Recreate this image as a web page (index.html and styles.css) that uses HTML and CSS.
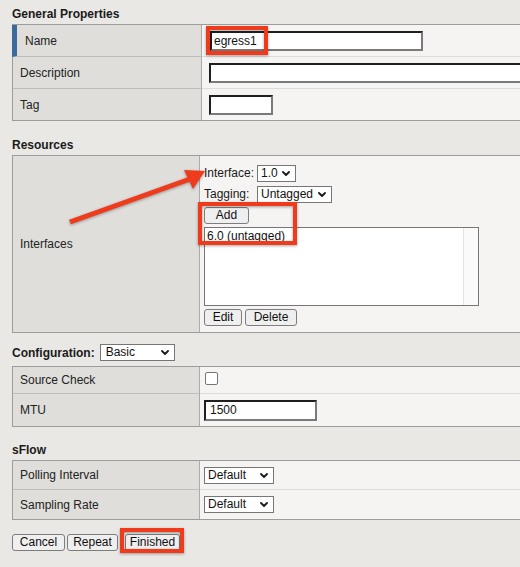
FILE: index.html
```html
<!DOCTYPE html>
<html>
<head>
<meta charset="utf-8">
<title>Interface properties</title>
<link rel="stylesheet" href="styles.css">
</head>
<body>
<div class="page">
  <h2 class="section-title title-general">General Properties</h2>
  <div class="ptable ptable-general">
    <div class="label label-active">Name</div>
    <div class="value value-general"><input class="textbox tb-name" type="text" value="egress1"></div>
    <div class="label">Description</div>
    <div class="value value-general"><input class="textbox tb-desc" type="text" value=""></div>
    <div class="label last">Tag</div>
    <div class="value value-general last"><input class="textbox tb-tag" type="text" value=""></div>
  </div>

  <h2 class="section-title title-resources">Resources</h2>
  <div class="ptable ptable-resources">
    <div class="label last">Interfaces</div>
    <div class="value value-res last">
      <div class="iface-form">
        <span class="form-label">Interface:</span>
        <span class="select sel-iface"><span>1.0</span><svg class="chev" viewBox="0 0 8 5" width="8" height="5"><path d="M1 1 L4 4 L7 1"/></svg></span>
        <span class="form-label">Tagging:</span>
        <span class="select sel-tag"><span>Untagged</span><svg class="chev" viewBox="0 0 8 5" width="8" height="5"><path d="M1 1 L4 4 L7 1"/></svg></span>
      </div>
      <button class="btn btn-add" type="button">Add</button>
      <div class="listbox">
        <div class="list-items"><div class="list-item">6.0 (untagged)</div></div>
        <div class="list-scroll"></div>
      </div>
      <div class="btn-row">
        <button class="btn btn-edit" type="button">Edit</button>
        <button class="btn btn-delete" type="button">Delete</button>
      </div>
    </div>
  </div>

  <div class="config-line">
    <h2 class="section-title inline">Configuration:</h2>
    <span class="select sel-basic"><span>Basic</span><svg class="chev" viewBox="0 0 8 5" width="8" height="5"><path d="M1 1 L4 4 L7 1"/></svg></span>
  </div>
  <div class="ptable ptable-config">
    <div class="label">Source Check</div>
    <div class="value value-std"><span class="checkbox"></span></div>
    <div class="label last">MTU</div>
    <div class="value value-std last"><input class="textbox tb-mtu" type="text" value="1500"></div>
  </div>

  <h2 class="section-title title-sflow">sFlow</h2>
  <div class="ptable ptable-sflow">
    <div class="label">Polling Interval</div>
    <div class="value value-std"><span class="select sel-default"><span>Default</span><svg class="chev" viewBox="0 0 8 5" width="8" height="5"><path d="M1 1 L4 4 L7 1"/></svg></span></div>
    <div class="label last">Sampling Rate</div>
    <div class="value value-std last"><span class="select sel-default"><span>Default</span><svg class="chev" viewBox="0 0 8 5" width="8" height="5"><path d="M1 1 L4 4 L7 1"/></svg></span></div>
  </div>

  <div class="actions">
    <button class="btn btn-cancel" type="button">Cancel</button>
    <button class="btn btn-repeat" type="button">Repeat</button>
    <button class="btn btn-finished" type="button">Finished</button>
  </div>
</div>

<svg class="annotations" width="520" height="567" viewBox="0 0 520 567">
  <rect class="mark" x="208" y="28" width="58" height="25"/>
  <rect class="mark" x="200" y="204" width="95" height="39"/>
  <rect class="mark" x="122" y="530" width="60" height="21"/>
  <line class="arrow-line" x1="70" y1="222" x2="190" y2="179"/>
  <polygon class="arrow-head" points="205,171 184,170 193,189"/>
</svg>
</body>
</html>
```
FILE: styles.css
```css
* { box-sizing: border-box; }
html, body { margin: 0; padding: 0; }
body {
  background: #e9e8e5;
  font-family: "Liberation Sans", Arial, Helvetica, sans-serif;
  font-size: 12px;
  color: #1e1e1e;
  width: 520px;
  height: 567px;
  overflow: hidden;
  position: relative;
}
.page { padding-left: 12px; width: 520px; overflow: hidden; }

.section-title {
  margin: 0;
  font-size: 12px;
  font-weight: bold;
  line-height: 19px;
  color: #1a1a1a;
}
.title-general { padding-top: 5px; }
.title-resources { padding-top: 15px; }
.title-sflow { padding-top: 14px; }
.section-title.inline { line-height: 17px; padding-top: 2px; }

.ptable {
  display: grid;
  border-top: 1px solid #9c9c9c;
  border-left: 1px solid #9c9c9c;
  width: 548px;
}
.ptable-general { grid-template-columns: 189px 1fr; grid-auto-rows: 32px; }
.ptable-resources { grid-template-columns: 187px 1fr; grid-template-rows: 177px; }
.ptable-config { grid-template-columns: 187px 1fr; grid-template-rows: 27px 33px; }
.ptable-sflow { grid-template-columns: 187px 1fr; grid-template-rows: 29px 30px; }

.label {
  background: #dfdedb;
  border-right: 1px solid #ababab;
  border-bottom: 1px solid #bdbdbd;
  display: flex;
  align-items: center;
  padding-left: 7px;
  color: #222;
}
.label-active {
  margin-left: -1px;
  border-left: 5px solid #3b6a9b;
  padding-left: 8px;
}
.value {
  background: #f5f4f2;
  border-bottom: 1px solid #dcdcdc;
  display: flex;
  align-items: center;
}
.label.last, .value.last { border-bottom-color: #9c9c9c; }
.value-general { padding-left: 7px; }
.value-std { padding-left: 4px; }
.value-res {
  flex-direction: column;
  align-items: flex-start;
  padding: 9px 0 0 4px;
}

.textbox {
  font-family: "Liberation Sans", Arial, sans-serif;
  font-size: 12px;
  color: #111;
  background: #fff;
  border-style: solid;
  border-width: 2px;
  border-color: #1f1f1f #7a7a7a #7a7a7a #1f1f1f;
  padding: 0 2px;
  margin: 0;
  height: 20px;
  outline: none;
}
.tb-name { width: 213px; margin-left: 1px; }
.tb-desc { width: 340px; }
.tb-tag { width: 64px; }
.tb-mtu { width: 113px; height: 21px; padding-left: 4px; }

.select {
  display: inline-flex;
  align-items: center;
  justify-content: space-between;
  height: 17px;
  background: #fff;
  border: 1px solid #767676;
  padding: 0 5px 0 3px;
  font-size: 12px;
  color: #111;
  line-height: 15px;
}
.chev { fill: none; stroke: #1a1a1a; stroke-width: 1.8; stroke-linecap: round; stroke-linejoin: round; }
.sel-iface { width: 39px; }
.sel-tag { width: 75px; }
.sel-basic { width: 75px; padding-left: 5px; }
.sel-default { width: 70px; }

.iface-form {
  display: grid;
  grid-template-columns: 53px auto;
  row-gap: 4px;
  align-items: center;
}
.form-label { color: #1a1a1a; line-height: 15px; }

.btn {
  font-family: "Liberation Sans", Arial, sans-serif;
  font-size: 12px;
  color: #111;
  background: #efefef;
  border: 1px solid #7d7d7d;
  border-radius: 3px;
  height: 17px;
  padding: 0;
  margin: 0;
  line-height: 15px;
  text-align: center;
}
.btn-add { width: 45px; margin-top: 4px; }
.btn-edit { width: 38px; }
.btn-delete { width: 52px; margin-left: 3px; }
.btn-cancel { width: 53px; }
.btn-repeat { width: 51px; margin-left: 2px; }
.btn-finished { width: 55px; margin-left: 7px; }

.listbox {
  display: flex;
  width: 275px;
  height: 79px;
  margin-top: 3px;
  background: #fff;
  border: 1px solid #767676;
}
.list-items { flex: 1; padding: 1px 0 0 2px; }
.list-item { line-height: 15px; color: #111; }
.list-scroll { width: 15px; background: #fafafa; border-left: 1px solid #e4e4e4; }

.btn-row { display: flex; margin-top: 3px; }

.config-line {
  display: flex;
  align-items: center;
  gap: 5px;
  padding: 11px 0 5px 0;
  height: 33px;
}

.checkbox {
  display: inline-block;
  width: 13px;
  height: 13px;
  background: #fff;
  border: 1px solid #767676;
  border-radius: 2px;
  margin: -3px 0 0 1px;
}

.actions { display: flex; margin-top: 14px; }

.annotations {
  position: absolute;
  top: 0;
  left: 0;
  pointer-events: none;
  filter: drop-shadow(0 1px 1.5px rgba(0,0,0,0.35));
}
.mark { fill: none; stroke: #ef3a1c; stroke-width: 4; }
.arrow-line { stroke: #ef3a1c; stroke-width: 5; }
.arrow-head { fill: #ef3a1c; }
```
